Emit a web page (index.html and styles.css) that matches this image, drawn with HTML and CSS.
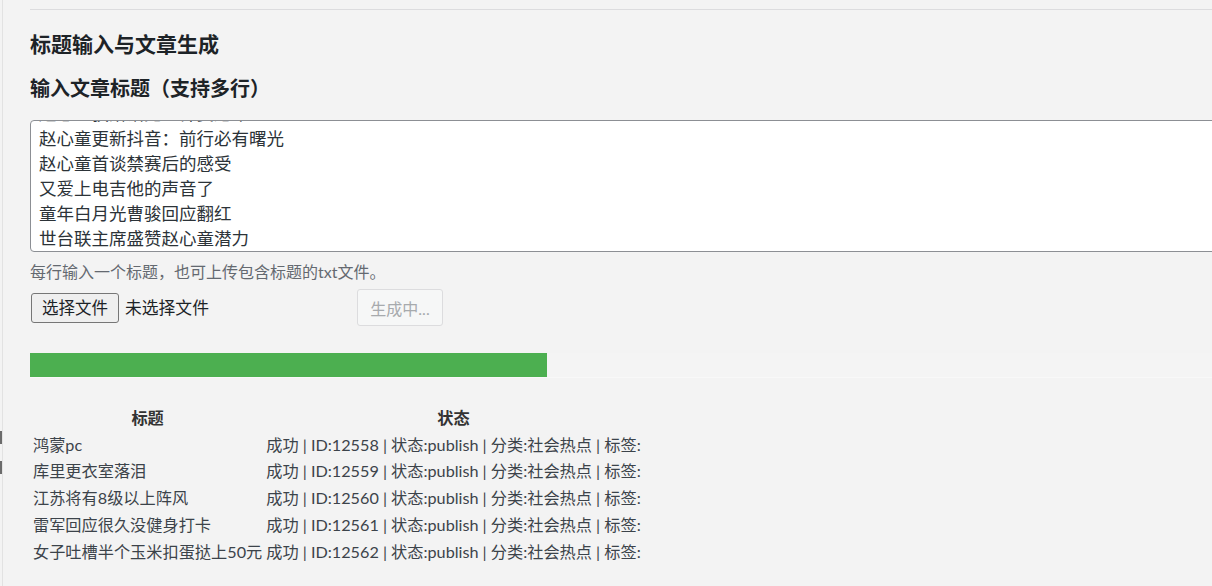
FILE: index.html
```html
<!DOCTYPE html>
<html lang="zh-CN">
<head>
<meta charset="utf-8">
<title>标题输入与文章生成</title>
<link rel="stylesheet" href="styles.css">
</head>
<body>
<div class="edge"></div>
<div class="edge-mark edge-mark-1"></div>
<div class="edge-mark edge-mark-2"></div>
<div class="wrap">
  <div class="rule"></div>
  <h1 class="title">标题输入与文章生成</h1>
  <h2 class="subtitle">输入文章标题（支持多行）</h2>
  <textarea class="titles" id="titles">鸿蒙pc
库里更衣室落泪
江苏将有8级以上阵风
雷军回应很久没健身打卡
女子吐槽半个玉米扣蛋挞上50元
赵心童获斯诺克世锦赛冠军
赵心童更新抖音：前行必有曙光
赵心童首谈禁赛后的感受
又爱上电吉他的声音了
童年白月光曹骏回应翻红
世台联主席盛赞赵心童潜力</textarea>
  <p class="hint">每行输入一个标题，也可上传包含标题的txt文件。</p>
  <div class="actions">
    <div class="file-group">
      <button class="file-btn" type="button">选择文件</button>
      <span class="file-name">未选择文件</span>
    </div>
    <button class="gen-btn" type="button" disabled>生成中...</button>
  </div>
  <div class="progress"><div class="progress-bar" style="width: 39.17%"></div></div>
  <table class="results">
    <thead>
      <tr><th>标题</th><th>状态</th></tr>
    </thead>
    <tbody>
      <tr><td>鸿蒙pc</td><td>成功 | ID:12558 | 状态:publish | 分类:社会热点 | 标签:</td></tr>
      <tr><td>库里更衣室落泪</td><td>成功 | ID:12559 | 状态:publish | 分类:社会热点 | 标签:</td></tr>
      <tr><td>江苏将有8级以上阵风</td><td>成功 | ID:12560 | 状态:publish | 分类:社会热点 | 标签:</td></tr>
      <tr><td>雷军回应很久没健身打卡</td><td>成功 | ID:12561 | 状态:publish | 分类:社会热点 | 标签:</td></tr>
      <tr><td>女子吐槽半个玉米扣蛋挞上50元</td><td>成功 | ID:12562 | 状态:publish | 分类:社会热点 | 标签:</td></tr>
    </tbody>
  </table>
</div>
<script src="script.js"></script>
</body>
</html>
```

FILE: styles.css
```css
html, body {
  margin: 0;
  padding: 0;
  overflow: hidden;
  background: #f3f3f3;
}
body {
  font-family: Lato, "Noto Sans CJK SC", sans-serif;
  color: #3c434a;
  position: relative;
  min-height: 586px;
}
.edge {
  position: absolute;
  left: 2px;
  top: 0;
  bottom: 0;
  width: 1px;
  background: #e2e2e2;
}
.edge-mark {
  position: absolute;
  left: 0;
  width: 2px;
  height: 13px;
  background: #6b6b6b;
}
.edge-mark-1 { top: 431px; }
.edge-mark-2 { top: 461px; }
.wrap {
  width: 1320px;
  padding-left: 30px;
}
.rule {
  margin-top: 9px;
  border-top: 1px solid #dcdcde;
}
.title {
  margin: 20px 0 0;
  font-size: 21px;
  line-height: 28px;
  font-weight: 700;
  color: #1d2327;
}
.subtitle {
  margin: 16px 0 0;
  font-size: 20px;
  line-height: 28px;
  font-weight: 700;
  color: #1d2327;
}
.titles {
  display: block;
  box-sizing: border-box;
  margin: 18px 0 0;
  width: 1300px;
  height: 132px;
  padding: 0 8px;
  border: 1px solid #8c8f94;
  border-radius: 4px;
  background: #fff;
  font-family: Lato, "Noto Sans CJK SC", sans-serif;
  font-size: 17.5px;
  line-height: 25px;
  color: #2c3338;
  resize: none;
  overflow: hidden;
  outline: none;
}
.hint {
  margin: 9px 0 0;
  font-size: 16px;
  line-height: 22px;
  color: #646970;
}
.actions {
  display: flex;
  align-items: center;
  margin-top: 6px;
  padding-left: 1px;
}
.file-group {
  display: flex;
  align-items: center;
  width: 326px;
  gap: 6px;
}
.file-btn {
  box-sizing: border-box;
  height: 30px;
  padding: 0 10px;
  border: 1px solid #767676;
  border-radius: 3px;
  background: #efefef;
  font-family: Lato, "Noto Sans CJK SC", sans-serif;
  font-size: 16.5px;
  line-height: 28px;
  color: #1d2327;
}
.file-name {
  font-size: 16.8px;
  line-height: 28px;
  color: #1d2327;
}
.gen-btn {
  box-sizing: border-box;
  width: 86px;
  height: 37px;
  padding: 0;
  border: 1px solid #dcdcde;
  border-radius: 3px;
  background: #f6f7f7;
  font-family: Lato, "Noto Sans CJK SC", sans-serif;
  font-size: 16px;
  color: #a7aaad;
}
.progress {
  margin-top: 27px;
  height: 24px;
  background: #f4f4f4;
  box-shadow: 0 1px 0 #f8f8f8;
}
.progress-bar {
  height: 100%;
  background: #4caf50;
}
.results {
  margin-top: 27px;
  border-spacing: 2px;
  font-size: 16.2px;
  line-height: 22.7px;
  color: #3c434a;
}
.results th,
.results td {
  padding: 1px;
  white-space: nowrap;
}
.results th {
  font-weight: 700;
  color: #333;
}
```

FILE: script.js
```js
var t = document.getElementById('titles');
t.scrollTop = t.scrollHeight;
```
